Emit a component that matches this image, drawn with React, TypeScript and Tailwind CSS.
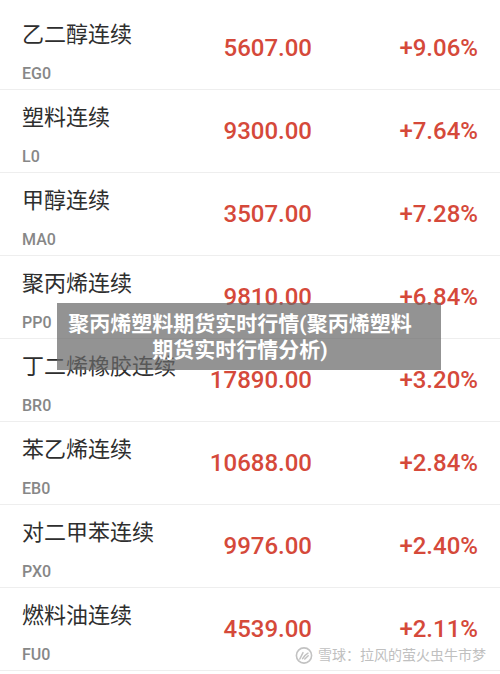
import React from "react";

type Quote = {
  name: string;
  code: string;
  price: string;
  change: string;
};

const quotes: Quote[] = [
  { name: "乙二醇连续", code: "EG0", price: "5607.00", change: "+9.06%" },
  { name: "塑料连续", code: "L0", price: "9300.00", change: "+7.64%" },
  { name: "甲醇连续", code: "MA0", price: "3507.00", change: "+7.28%" },
  { name: "聚丙烯连续", code: "PP0", price: "9810.00", change: "+6.84%" },
  { name: "丁二烯橡胶连续", code: "BR0", price: "17890.00", change: "+3.20%" },
  { name: "苯乙烯连续", code: "EB0", price: "10688.00", change: "+2.84%" },
  { name: "对二甲苯连续", code: "PX0", price: "9976.00", change: "+2.40%" },
  { name: "燃料油连续", code: "FU0", price: "4539.00", change: "+2.11%" },
];

const font = "font-['Roboto','Noto_Sans_CJK_SC',sans-serif]";

const QuoteRow = ({ q }: { q: Quote }) => (
  <div className="flex h-[83px] items-center border-b border-[#eeeeee]">
    <div className="w-[192px] self-start pl-[22px] pt-[14px]">
      <div className="text-[22px] leading-[28px] text-[#2e2e2e] whitespace-nowrap">{q.name}</div>
      <div className="mt-[15px] text-[16px] leading-[20px] font-medium text-[#878787]">{q.code}</div>
    </div>
    <div className="w-[120px] text-right text-[24px] font-medium text-[#d5493a]">{q.price}</div>
    <div className="w-[166px] text-right text-[24px] font-medium text-[#d5493a]">{q.change}</div>
  </div>
);

export default function App() {
  return (
    <div className={`relative w-[500px] h-[674px] overflow-hidden bg-white ${font}`}>
      <div className="pt-[7px]">
        {quotes.map((q) => (
          <QuoteRow key={q.code} q={q} />
        ))}
      </div>

      <div className="absolute left-[57px] top-[303px] w-[384px] h-[67px] pr-[18px] bg-[rgba(105,105,105,0.72)] flex flex-col items-center justify-center">
        <p className="text-white font-bold text-[21px] leading-[26px] text-center whitespace-nowrap">
          聚丙烯塑料期货实时行情(聚丙烯塑料
          <br />
          期货实时行情分析)
        </p>
      </div>

      <div className="absolute left-[295px] top-[647px] flex items-center gap-[5px] text-[#c0c0c0]">
        <svg width="18" height="17" viewBox="0 0 18 17" fill="none">
          <circle cx="9" cy="8.5" r="7.6" stroke="#c2c2c2" strokeWidth="1.6" />
          <path d="M4.8 12 L8 5.6 M7.6 11.6 C9 9.5 10.5 7.5 13 6.2 M9.8 12 L13.2 8.8" stroke="#c2c2c2" strokeWidth="1.5" strokeLinecap="round" />
        </svg>
        <span className="text-[14px] leading-[17px] whitespace-nowrap">雪球：拉风的萤火虫牛市梦</span>
      </div>
    </div>
  );
}
